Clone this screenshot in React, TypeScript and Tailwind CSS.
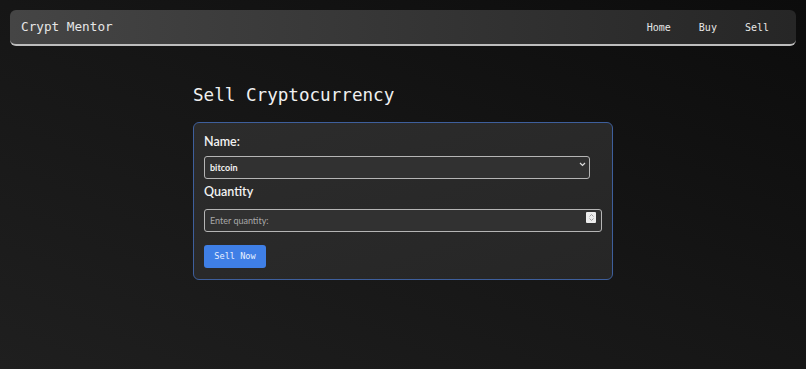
import React from "react";

export default function App() {
  const mono = { fontFamily: '"DejaVu Sans Mono", "Liberation Mono", monospace' };
  const sans = { fontFamily: 'Lato, "Noto Sans", sans-serif' };
  return (
    <div className="w-[806px] h-[369px] bg-gradient-to-tr from-[#1f1f1f] via-[#161616] to-[#0c0c0c] overflow-hidden pt-[10px]">
      <nav className="mx-[10px] h-[36px] rounded-[6px] bg-gradient-to-r from-[#454545] to-[#262626] border-b-2 border-[#bdbdbd] flex items-center justify-between pl-[11px] pr-[27px]" style={mono}>
        <span className="text-[12.7px] text-[#e6e6e6]">Crypt Mentor</span>
        <div className="flex items-center gap-[28px] text-[10px] text-[#e6e6e6]">
          <span>Home</span>
          <span>Buy</span>
          <span>Sell</span>
        </div>
      </nav>
      <div className="ml-[193px] mt-[37px]">
        <h1 className="text-[17.6px] text-[#f0f0f0] leading-[24px]" style={mono}>Sell Cryptocurrency</h1>
        <div className="mt-[15px] w-[420px] h-[158px] rounded-[6px] border-[1.5px] border-[#3e5f9c] bg-gradient-to-br from-[#2c2c2c] to-[#262626] pl-[10px] pt-[10px]" style={sans}>
          <div className="text-[12.5px] font-semibold text-[#f2f2f2] leading-[18px]">Name:</div>
          <div className="relative mt-[2px] w-[386px] h-[23px]">
            <select className="appearance-none w-full h-full rounded-[3px] border-[1.5px] border-[#b5b5b5] bg-[#313131] text-[9px] font-bold text-[#f0f0f0] pl-[5px] outline-none" style={sans}>
              <option>bitcoin</option>
            </select>
            <svg className="absolute right-[4px] top-[9px]" width="7" height="5" viewBox="0 0 7 5">
              <path d="M1 1 L3.5 3.5 L6 1" fill="none" stroke="#dcdcdc" strokeWidth="1.2" />
            </svg>
          </div>
          <div className="mt-[7px] text-[12.5px] font-semibold text-[#f2f2f2] leading-[18px]">Quantity</div>
          <div className="relative mt-[5px] w-[398px] h-[23px]">
            <input type="text" placeholder="Enter quantity:" className="w-full h-full rounded-[3px] border-[1.5px] border-[#b5b5b5] bg-[#313131] text-[9px] text-[#ddd] placeholder:text-[#a8a8a8] pl-[5px] outline-none" style={sans} />
            <div className="absolute right-[6px] top-[6px] w-[10px] h-[11px] bg-[#ececec] rounded-[1px] flex flex-col items-center justify-center gap-[1px]">
              <svg width="5" height="3" viewBox="0 0 5 3"><path d="M0.5 2.5 L2.5 0.5 L4.5 2.5" fill="none" stroke="#8a8a8a" strokeWidth="0.8" /></svg>
              <svg width="5" height="3" viewBox="0 0 5 3"><path d="M0.5 0.5 L2.5 2.5 L4.5 0.5" fill="none" stroke="#8a8a8a" strokeWidth="0.8" /></svg>
            </div>
          </div>
          <button className="mt-[16px] w-[62px] h-[23px] rounded-[3px] bg-[#3f7fe6] text-[8.6px] text-[#e8efff]" style={mono}>Sell Now</button>
        </div>
      </div>
    </div>
  );
}
